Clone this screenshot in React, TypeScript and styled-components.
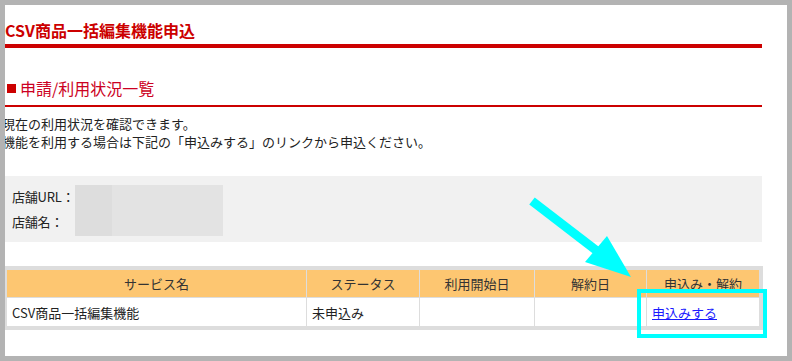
import * as React from 'react';
import styled, { createGlobalStyle } from 'styled-components';

const GlobalStyle = createGlobalStyle`
  html, body {
    margin: 0;
    padding: 0;
    background: #b3b3b3;
  }
  body {
    font-family: "Noto Sans CJK JP", "Liberation Sans", sans-serif;
    color: #333;
  }
  * {
    box-sizing: border-box;
  }
`;

const services = [
  { name: 'CSV商品一括編集機能', status: '未申込み', start: '', end: '', link: '申込みする' },
];

const App = () => {
  return (
    <Page>
      <GlobalStyle />
      <Frame>
        <Title>CSV商品一括編集機能申込</Title>
        <SectionHeading>
          <Square />
          申請/利用状況一覧
        </SectionHeading>
        <Lead>
          現在の利用状況を確認できます。
          <br />
          機能を利用する場合は下記の「申込みする」のリンクから申込ください。
        </Lead>
        <ShopBox>
          <Labels>
            <div>店舗URL：</div>
            <div>店舗名：</div>
          </Labels>
          <Mask>
            <MaskPart tone="#dddddd" width={37} />
            <MaskPart tone="#e3e3e3" width={111} />
          </Mask>
        </ShopBox>
        <Table>
          <colgroup>
            <col style={{ width: 299 }} />
            <col style={{ width: 112 }} />
            <col style={{ width: 114 }} />
            <col style={{ width: 111 }} />
            <col style={{ width: 112 }} />
          </colgroup>
          <thead>
            <tr>
              <Th>サービス名</Th>
              <Th>ステータス</Th>
              <Th>利用開始日</Th>
              <Th>解約日</Th>
              <Th>申込み・解約</Th>
            </tr>
          </thead>
          <tbody>
            {services.map((s) => (
              <tr key={s.name}>
                <Td>{s.name}</Td>
                <Td>{s.status}</Td>
                <Td>{s.start}</Td>
                <Td>{s.end}</Td>
                <Td>
                  <ApplyLink href="#">{s.link}</ApplyLink>
                </Td>
              </tr>
            ))}
          </tbody>
        </Table>
      </Frame>
      <Annotation viewBox="0 0 792 361" width={792} height={361}>
        <line x1={532} y1={201} x2={601} y2={254} stroke="#00ffff" strokeWidth={9} />
        <polygon points="607,236 585,262 631,277" fill="#00ffff" />
        <rect x={639} y={291} width={126} height={45} fill="none" stroke="#00ffff" strokeWidth={4} />
      </Annotation>
    </Page>
  );
};

const Page = styled.div`
  position: relative;
  width: 792px;
  height: 361px;
  padding: 5px;
`;
const Frame = styled.div`
  height: 351px;
  background: #fff;
  padding-right: 25px;
  overflow: hidden;
`;
const Title = styled.h1`
  margin: 0;
  padding: 15px 0 4px;
  font-size: 16px;
  line-height: 20px;
  font-weight: bold;
  color: #cc0000;
  border-bottom: 4px solid #cc0000;
`;
const SectionHeading = styled.h2`
  margin: 28px 0 0;
  padding-bottom: 5px;
  display: flex;
  align-items: center;
  font-size: 16px;
  line-height: 24px;
  font-weight: normal;
  color: #cc0022;
  border-bottom: 2px solid #cc0000;
`;
const Square = styled.span`
  display: inline-block;
  width: 9px;
  height: 9px;
  margin: 0 4px 0 2px;
  background: #cc0000;
`;
const Lead = styled.p`
  margin: 8px 0 0 -3px;
  font-size: 13px;
  line-height: 18px;
  color: #222;
`;
const ShopBox = styled.div`
  margin-top: 25px;
  height: 66px;
  padding: 9px 0 0 7px;
  display: flex;
  align-items: flex-start;
  background: #f1f1f1;
`;
const Labels = styled.div`
  flex: 0 0 62px;
  margin-top: -1px;
  font-size: 13px;
  line-height: 25px;
  white-space: nowrap;
  letter-spacing: -0.2px;
  color: #222;
`;
const Mask = styled.div`
  display: flex;
  flex-shrink: 0;
  height: 51px;
`;
const MaskPart = styled.div<{ tone: string; width: number }>`
  width: ${({ width }) => width}px;
  background: ${({ tone }) => tone};
`;
const Table = styled.table`
  margin: 24px 0 0 -2px;
  width: calc(100% + 2px);
  table-layout: fixed;
  border-collapse: separate;
  border-spacing: 1px;
  border: 3px solid #dddddd;
  background: #dddddd;
  font-size: 13px;
`;
const Th = styled.th`
  height: 27px;
  padding: 0 4px;
  background: #fdc671;
  font-weight: normal;
  text-align: center;
  color: #333;
`;
const Td = styled.td`
  height: 28px;
  padding: 0 5px;
  background: #fff;
  color: #222;
`;
const ApplyLink = styled.a`
  color: #1a1aff;
  text-decoration: underline;
`;
const Annotation = styled.svg`
  position: absolute;
  left: 0;
  top: 0;
  pointer-events: none;
`;

export default App;
